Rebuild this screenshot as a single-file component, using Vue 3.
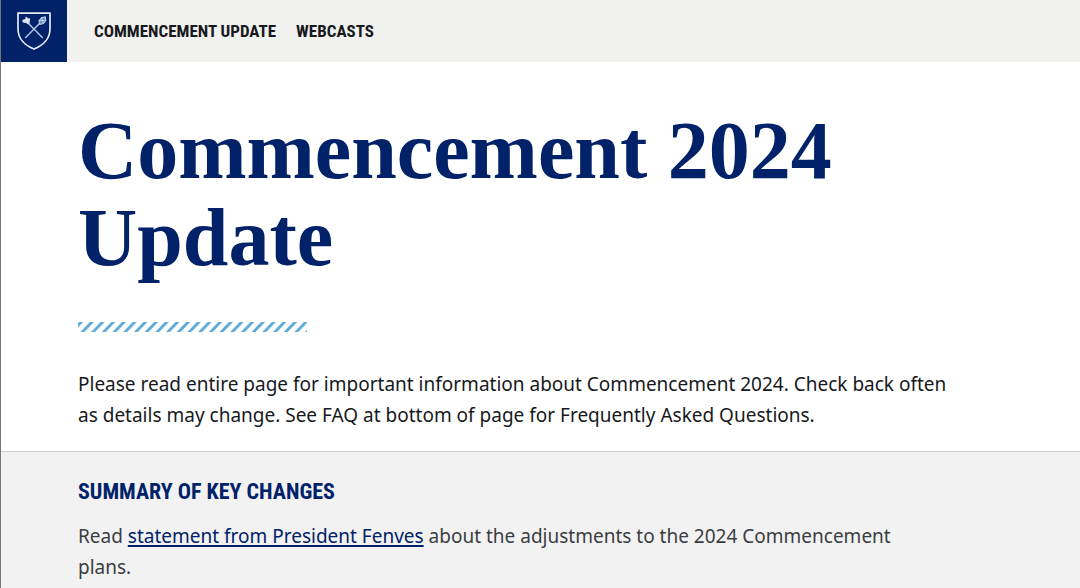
<template>
  <div class="page">
    <header class="site-header">
      <a class="brand" href="#" aria-label="Home">
        <svg class="shield" viewBox="0 0 34 38" aria-hidden="true">
          <path d="M1 1.2H33V17C33 26.5 26 33.5 17 37C8 33.5 1 26.5 1 17Z" fill="none" stroke="#e4ebf7" stroke-width="1.7" />
          <g stroke="#b9c9e6" stroke-width="1.4" fill="none">
            <path d="M10.5 10.5L25.8 26" />
            <path d="M23.5 10.5L8.2 26" />
          </g>
          <path d="M5.2 8L8.2 7L8.8 4.6L11 6.2L13.2 6.4L12.8 9L12.4 12.4L8.8 11L5.8 10.6Z" fill="#dbe5f5" />
          <path d="M22 8.5L24.4 5.6L28.4 4.8L28.8 8.4L26.6 11.6L22.6 12.4Z" fill="#6f8fc4" stroke="#cbd8ee" stroke-width="1" />
          <path d="M24.4 5.6L26.6 11.6M22 8.5L28.8 8.4" stroke="#dbe5f5" stroke-width="0.7" fill="none" />
        </svg>
      </a>
      <nav class="site-nav" aria-label="Main">
        <a v-for="item in navItems" :key="item.label" :href="item.href">{{ item.label }}</a>
      </nav>
    </header>

    <main>
      <section class="intro">
        <h1>Commencement 2024 Update</h1>
        <svg class="stripes" viewBox="0 0 229 10" aria-hidden="true">
          <defs>
            <pattern id="stripe" width="10.7" height="10" patternUnits="userSpaceOnUse">
              <path d="M1.2 0H5.2L-4.4 10H-8.4ZM11.9 0H15.9L6.3 10H2.3ZM22.6 0H26.6L17 10H13Z" fill="#5fabd6" />
            </pattern>
          </defs>
          <rect width="229" height="10" fill="url(#stripe)" />
        </svg>
        <p>
          Please read entire page for important information about Commencement 2024. Check back often as
          details may change. See FAQ at bottom of page for Frequently Asked Questions.
        </p>
      </section>

      <section class="summary">
        <h2>Summary of Key Changes</h2>
        <p>
          Read <a href="#statement">statement from President Fenves</a> about the adjustments to the 2024
          Commencement plans.
        </p>
      </section>
    </main>
  </div>
</template>

<script setup>
const navItems = [
  { label: 'Commencement Update', href: '#update' },
  { label: 'Webcasts', href: '#webcasts' }
];
</script>

<style>
body { background: #ffffff; }
</style>

<style scoped>
.page {
  display: flex;
  flex-direction: column;
  min-height: 100vh;
  box-sizing: border-box;
  border-left: 1px solid #77777b;
  font-family: "Noto Sans", sans-serif;
  font-size: 19px;
  line-height: 31px;
  color: #17191d;
}

/* HEADER */
.site-header {
  display: flex;
  background: #f1f1ef;
}
.brand {
  display: flex;
  align-items: center;
  justify-content: center;
  width: 66px;
  height: 62px;
  background: #012169;
}
.shield { width: 34px; height: 38px; }
.site-nav {
  display: flex;
  align-items: center;
  gap: 20px;
  padding-left: 27px;
}
.site-nav a {
  font-family: "Roboto Condensed", "Open Sans Condensed", sans-serif;
  font-size: 17px;
  font-weight: 700;
  text-transform: uppercase;
  text-decoration: none;
  color: #17191d;
}

/* CONTENT */
main {
  display: flex;
  flex-direction: column;
  flex: 1;
}
.intro { padding: 45px 120px 20px 77px; }
h1 {
  margin: 0;
  font-family: "Liberation Serif", serif;
  font-size: 82px;
  font-weight: 700;
  line-height: 87px;
  color: #012169;
}
.stripes {
  display: block;
  width: 229px;
  height: 10px;
  margin: 41px 0 37px;
}
p { margin: 0; }

.summary {
  flex: 1;
  padding: 24px 150px 5px 77px;
  border-top: 1px solid #cfcfcf;
  background: #f2f2f2;
}
.summary h2 {
  margin: 0 0 14px;
  font-family: "Roboto Condensed", "Open Sans Condensed", sans-serif;
  font-size: 22px;
  font-weight: 700;
  line-height: 31px;
  text-transform: uppercase;
  color: #012169;
}
.summary p { color: #3b3d42; }
.summary a {
  color: #012169;
  text-underline-offset: 2px;
  text-decoration-thickness: 2px;
}
</style>
